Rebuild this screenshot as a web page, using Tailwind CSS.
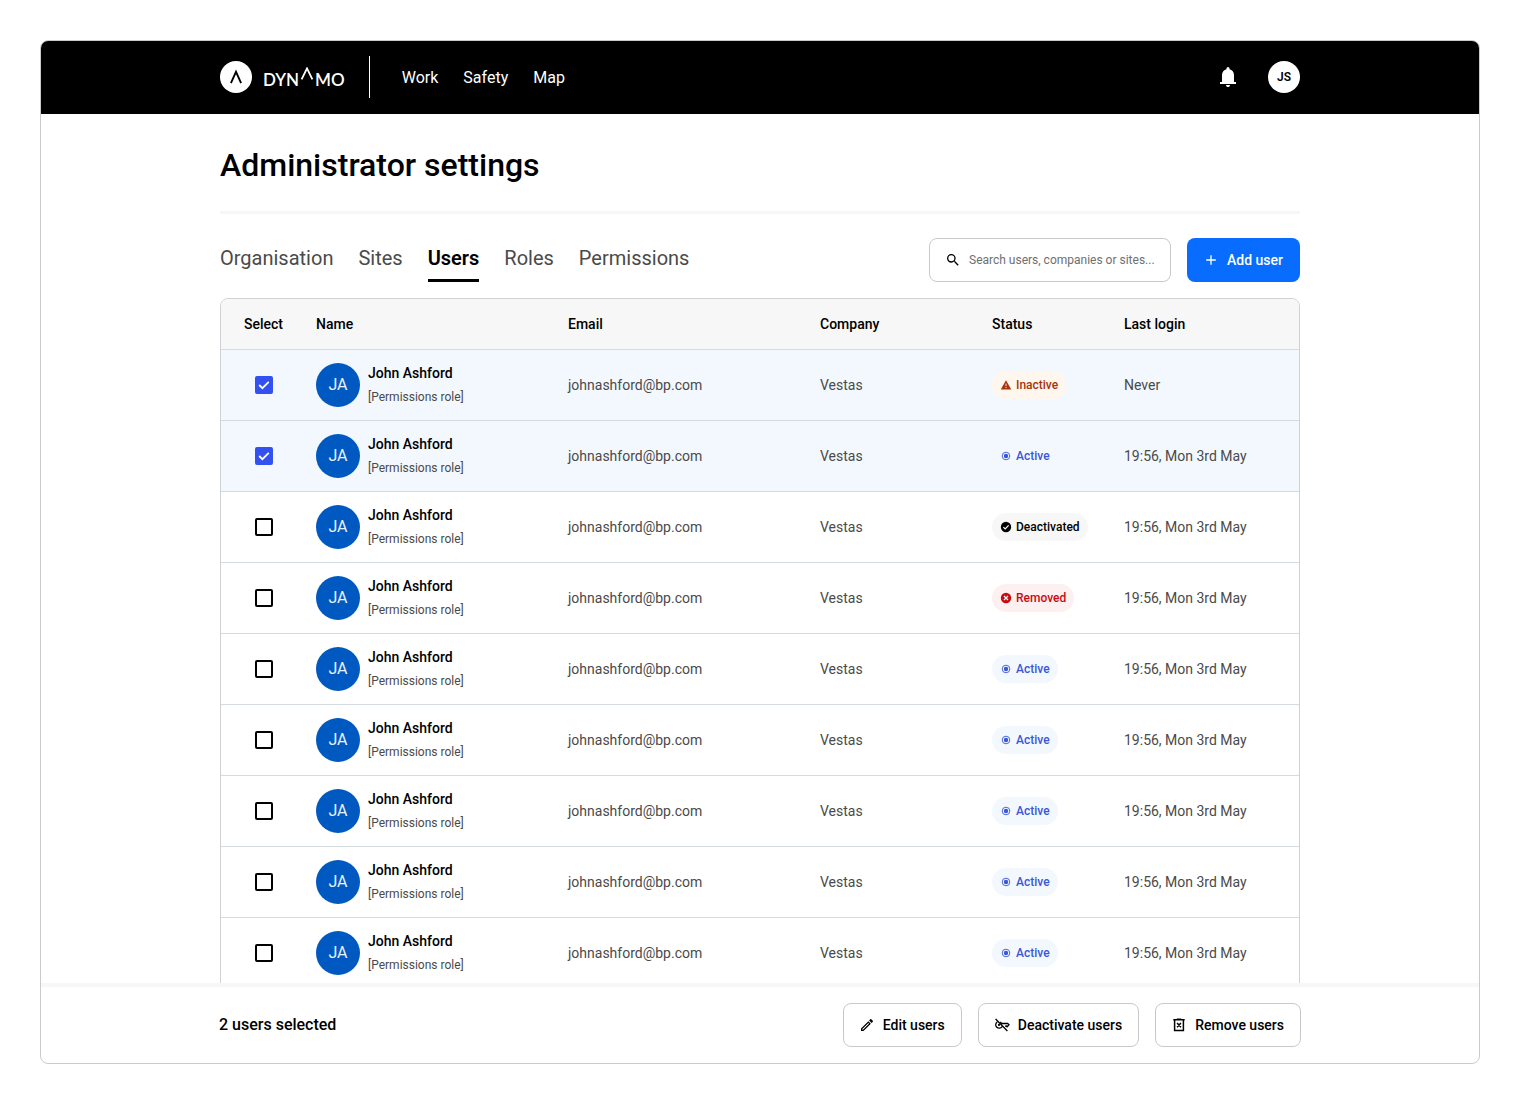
<!DOCTYPE html>
<html lang="en">
	<head>
		<meta charset="UTF-8" />
		<meta name="viewport" content="width=device-width, initial-scale=1.0" />
		<title>Administrator settings - Dynamo</title>
		<script src="https://cdn.jsdelivr.net/npm/@tailwindcss/browser@4"></script>
	</head>
	<body class="h-screen bg-white p-10 font-['Roboto',sans-serif] text-sm text-black">
		<div class="flex h-full flex-col overflow-hidden rounded-lg border border-[#c9cccd]">
			<header class="flex h-[73px] shrink-0 items-center bg-black pb-0.5 text-white">
				<div class="mx-auto flex w-full max-w-[1080px] items-center">
					<a href="#" aria-label="Dynamo" class="flex items-center">
						<svg class="size-8" viewBox="0 0 32 32" fill="none">
							<circle cx="16" cy="16" r="16" fill="#fff" />
							<path d="M10.9 22.2 16 10.8l5.1 11.4" stroke="#000" stroke-width="1.9" />
						</svg>
						<span class="ml-[11px] flex items-center pt-1.5 font-['Lato',sans-serif] text-[17px] leading-6 font-semibold">
							DYN
							<svg class="mx-px mb-3 h-[13px] w-3.5" viewBox="0 0 14 13" fill="none" stroke="currentColor" stroke-width="1.8">
								<path d="M1.6 12.4 7 1.4l5.4 11" />
							</svg>
							MO
						</span>
					</a>
					<div class="ml-6 h-[42px] w-px bg-white"></div>
					<nav class="ml-8 flex gap-[25px] pt-0.5 text-base">
						<a href="#">Work</a>
						<a href="#">Safety</a>
						<a href="#">Map</a>
					</nav>
					<button type="button" aria-label="Notifications" class="ml-auto">
						<svg class="size-6" viewBox="0 0 24 24" fill="currentColor">
							<path d="M4 19v-2h2v-7q0-2.08 1.25-3.69T10.5 4.2v-.7q0-.63.44-1.06T12 2t1.06.44.44 1.06v.7q2 .5 3.25 2.11T18 10v7h2v2zm8 3q-.82 0-1.41-.59T10 20h4q0 .82-.59 1.41T12 22" />
						</svg>
					</button>
					<button type="button" class="ml-7 size-8 rounded-full bg-white text-xs font-semibold text-black">JS</button>
				</div>
			</header>

			<main class="min-h-0 flex-1 overflow-y-auto [scrollbar-width:none]">
				<div class="mx-auto max-w-[1080px] pt-8">
					<h1 class="border-b-3 border-[#f7f7f7] pb-[27px] text-[32px] leading-[38px] font-medium">
						Administrator settings
					</h1>

					<div class="mt-6 flex items-center">
						<nav class="flex h-11 gap-[25px] text-xl text-[#4a4a4a] *:flex *:items-center *:border-b-3 *:pb-0.5">
							<a href="#" class="border-transparent">Organisation</a>
							<a href="#" class="border-transparent">Sites</a>
							<a href="#" aria-current="page" class="border-black font-semibold text-black">Users</a>
							<a href="#" class="border-transparent">Roles</a>
							<a href="#" class="border-transparent">Permissions</a>
						</nav>
						<label class="ml-auto flex h-11 w-[242px] items-center gap-2 rounded-lg border border-[#c9c9c9] px-[15px]">
							<svg class="size-4 shrink-0" viewBox="0 0 24 24" fill="currentColor">
								<path d="M15.5 14h-.79l-.28-.27A6.47 6.47 0 0 0 16 9.5 6.5 6.5 0 1 0 9.5 16c1.61 0 3.09-.59 4.23-1.57l.27.28v.79l5 4.99L20.49 19zm-6 0a4.5 4.5 0 1 1 0-9 4.5 4.5 0 0 1 0 9" />
							</svg>
							<input
								type="text"
								aria-label="Search users, companies or sites"
								placeholder="Search users, companies or sites..."
								class="min-w-0 flex-1 text-xs outline-none placeholder:text-[#6f6f6f]"
							/>
						</label>
						<button type="button" class="ml-4 flex h-11 items-center gap-2 rounded-lg bg-[#086cff] pr-[17px] pl-4 font-medium text-white">
							<svg class="size-4" viewBox="0 0 16 16" stroke="currentColor" stroke-width="1.3">
								<path d="M8 3.2v9.6M3.2 8h9.6" />
							</svg>
							Add user
						</button>
					</div>

					<div class="mt-4 overflow-hidden rounded-t-lg border border-[#cfd3d6]">
						<table class="w-full table-fixed border-separate border-spacing-0 text-left">
							<thead>
								<tr class="h-[51px] bg-[#f7f7f7] *:border-b *:border-[#d5dce3] *:px-2 *:font-medium *:first:pr-2.5">
									<th class="w-[87px] text-center">Select</th>
									<th class="w-[252px]">Name</th>
									<th class="w-[252px]">Email</th>
									<th class="w-[172px]">Company</th>
									<th class="w-[132px]">Status</th>
									<th>Last login</th>
								</tr>
							</thead>
							<tbody id="users"></tbody>
						</table>
					</div>
				</div>
			</main>

			<footer class="shrink-0 border-t-4 border-[#f7f7f7] py-4">
				<div class="mx-auto flex w-full max-w-[1082px] items-center gap-4 font-medium">
					<p class="mr-auto text-base">2 users selected</p>
					<button type="button" class="flex h-11 items-center gap-2 rounded-lg border border-[#c9c9c9] pr-4 pl-[15px]">
						<svg class="size-4" viewBox="0 0 24 24" fill="currentColor">
							<path d="m14.06 9.02.92.92L5.92 19H5v-.92zM17.66 3c-.25 0-.51.1-.7.29l-1.83 1.83 3.75 3.75 1.83-1.83a1 1 0 0 0 0-1.41l-2.34-2.34c-.2-.2-.45-.29-.71-.29m-3.6 3.19L3 17.25V21h3.75L17.81 9.94z" />
						</svg>
						Edit users
					</button>
					<button type="button" class="flex h-11 items-center gap-2 rounded-lg border border-[#c9c9c9] pr-4 pl-[15px]">
						<svg class="size-4" viewBox="0 0 16 16" fill="none" stroke="currentColor" stroke-width="1.3">
							<path d="m1.6 2 11.8 12M3.2 5a3.4 3.4 0 1 0 4.8 4.6M6.2 5q1 .4 1.6 1.5h5.9L15 7.8l-1.9 2-1-.9-.9.6" />
							<circle cx="5" cy="7.9" r="1.1" fill="currentColor" stroke="none" />
						</svg>
						Deactivate users
					</button>
					<button type="button" class="flex h-11 items-center gap-2 rounded-lg border border-[#c9c9c9] pr-4 pl-[15px]">
						<svg class="size-4" viewBox="0 0 16 16" fill="none" stroke="currentColor" stroke-width="1.5">
							<path d="M2.3 2.8h11.4M5.8 2.2h4.4M3.6 2.8v10.6h8.8V2.8M6.1 6l3.8 4.2M9.9 6l-3.8 4.2" />
						</svg>
						Remove users
					</button>
				</div>
			</footer>
		</div>

		<script>
			const statuses = {
				Inactive: {
					badge: "bg-[#fff6ee] text-[#a8330c]",
					icon: `<path d="M6 1.2 11.2 10.5H.8z" fill="currentColor" /><path d="M6 4.6v2.6M6 8v1.1" stroke="#fff6ee" stroke-width=".9" />`,
				},
				Active: {
					badge: "bg-[#f3f8ff] text-[#3a57d6]",
					icon: `<circle cx="6" cy="6" r="3.8" stroke="currentColor" stroke-width=".9" /><circle cx="6" cy="6" r="2.2" fill="currentColor" />`,
				},
				Deactivated: {
					badge: "bg-[#f7f7f7] text-black",
					icon: `<circle cx="6" cy="6" r="5.2" fill="currentColor" /><path d="m3.4 6.1 1.8 1.8 3.4-3.5" stroke="#fff" stroke-width="1.2" />`,
				},
				Removed: {
					badge: "bg-[#fdf0f0] text-[#c90a11]",
					icon: `<circle cx="6" cy="6" r="5.2" fill="currentColor" /><path d="m4 4 4 4M8 4 4 8" stroke="#fff" stroke-width="1.2" />`,
				},
			};

			const rows = ["Inactive", "Active", "Deactivated", "Removed", "Active", "Active", "Active", "Active", "Active"];

			document.getElementById("users").innerHTML = rows
				.map((status, i) => {
					const { badge, icon } = statuses[status];
					const selected = i < 2;
					return `
					<tr class="h-[71px] *:border-b *:border-[#d5dadf] *:px-2 *:first:pr-2.5 ${selected ? "bg-[#f3f8ff]" : "bg-white"}">
						<td>
							<label class="mx-auto grid size-[18px] *:col-start-1 *:row-start-1">
								<input type="checkbox" aria-label="Select John Ashford" ${selected ? "checked" : ""}
									class="peer size-[18px] appearance-none rounded-xs border-2 border-black checked:border-[#3350f0] checked:bg-[#3350f0]" />
								<svg class="pointer-events-none invisible size-[18px] peer-checked:visible" viewBox="0 0 18 18" fill="none" stroke="#fff" stroke-width="1.8">
									<path d="m4.2 9 3.2 3.2 6.4-6.3" />
								</svg>
							</label>
						</td>
						<td>
							<div class="flex items-center gap-2">
								<div class="flex size-11 items-center justify-center rounded-full bg-[#0059c1] text-base text-[#e8f3ff]">JA</div>
								<div class="leading-6">
									<p class="font-medium">John Ashford</p>
									<p class="text-xs leading-6 text-[#4a4a4a]">[Permissions role]</p>
								</div>
							</div>
						</td>
						<td class="text-[#4a4a4a]">johnashford@bp.com</td>
						<td class="text-[#4a4a4a]">Vestas</td>
						<td>
							<span class="inline-flex h-7 items-center gap-1 rounded-full px-2 align-middle text-xs font-medium ${badge}">
								<svg class="size-3" viewBox="0 0 12 12" fill="none">${icon}</svg>
								${status}
							</span>
						</td>
						<td class="text-[#4a4a4a]">${status === "Inactive" ? "Never" : "19:56, Mon 3rd May"}</td>
					</tr>`;
				})
				.join("");
		</script>
	</body>
</html>
